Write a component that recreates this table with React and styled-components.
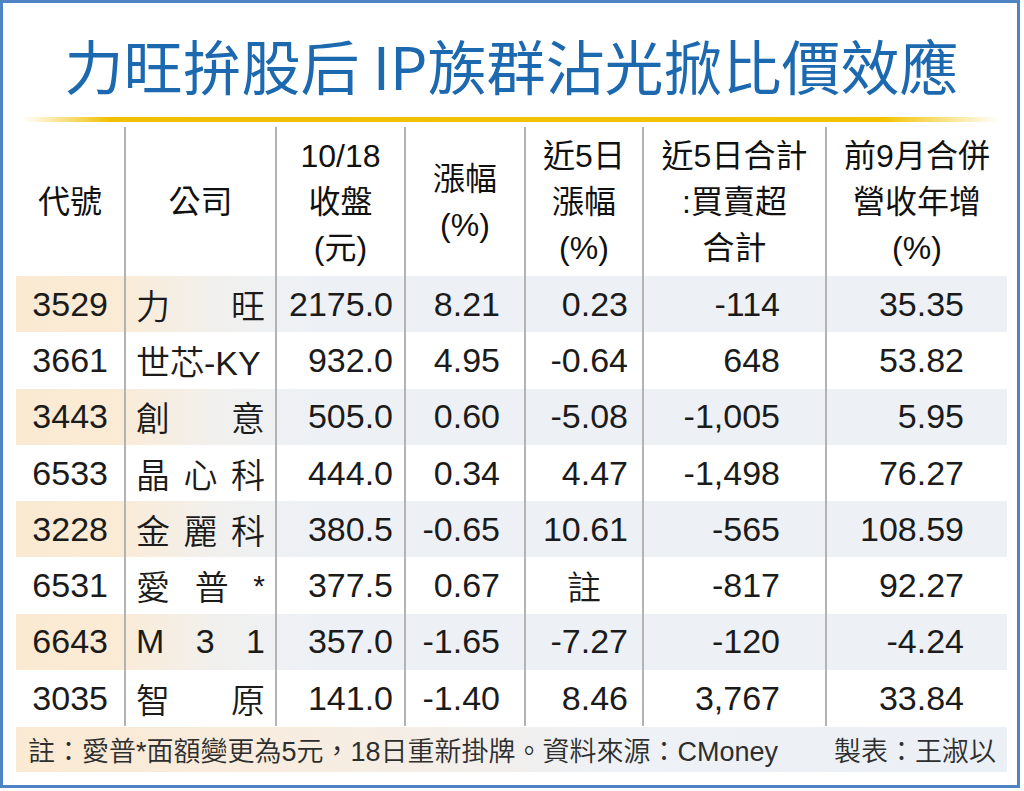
import React from 'react';
import styled, {createGlobalStyle} from 'styled-components';

const Global = createGlobalStyle`
    html, body {
        margin: 0;
        padding: 0;
        background: #fff;
    }
`
const COLS = '108px 151px 129px 120px 118px 183px 182px';
const SANS = `"Liberation Sans", "Noto Sans CJK TC", sans-serif`;

const Frame = styled.div`
    width: 1020px;
    height: 788px;
    box-sizing: border-box;
    border: 3px solid #4f84c4;
    padding: 0 10px 0 13px;
    background: #fff;
    font-family: ${SANS};
    color: #1b1b1b;
`
const Title = styled.h1`
    margin: 0;
    padding-top: 20px;
    line-height: 84px;
    font-family: "Noto Sans CJK TC", sans-serif;
    font-size: 59px;
    font-weight: 400;
    color: #1c69b0;
    text-align: center;
    white-space: nowrap;
`
const Rule = styled.div`
    margin: 10px 7px 0 6px;
    height: 5px;
    border-radius: 3px;
    background: linear-gradient(to right,
        rgba(242, 196, 0, 0) 0%,
        #f0c000 9%,
        #f3c300 88%,
        rgba(242, 196, 0, 0) 100%);
`
const Table = styled.div`
    margin-top: 5px;
`
const Row = styled.div`
    display: grid;
    grid-template-columns: ${COLS};
    height: ${p => p.$head ? '149px' : '56.3px'};
    background: ${p => p.$striped
        ? 'linear-gradient(to right, #fbead2 0px, #fbebd5 100px, #f1f0ee 200px, #edf1f6 300px, #edf1f6 100%)'
        : 'transparent'};
    & > div:not(:first-child) {
        border-left: 2px solid #b3b3b3;
    }
`
const HeadCell = styled.div`
    display: flex;
    flex-direction: column;
    align-items: center;
    justify-content: center;
    font-size: 32px;
    font-weight: 400;
    line-height: 46px;
    color: #111;
    white-space: nowrap;
`
const Cell = styled.div`
    display: flex;
    align-items: center;
    justify-content: ${p => p.$center ? 'center' : 'flex-end'};
    padding-right: ${p => p.$center ? 0 : p.$pad}px;
    font-size: 34px;
    font-weight: 350;
    white-space: nowrap;
`
const NameCell = styled.div`
    display: flex;
    align-items: center;
    justify-content: space-between;
    padding: 0 10px 0 10px;
    font-size: 34px;
    font-weight: 350;
    white-space: nowrap;
`
const Star = styled.span`
    align-self: flex-start;
    margin-top: 12px;
    font-size: 30px;
`
const Footer = styled.div`
    display: flex;
    align-items: center;
    justify-content: space-between;
    margin-top: 1px;
    height: 45px;
    padding: 0 11px 0 12px;
    font-size: 27px;
    font-weight: 350;
    color: #2e2e2e;
    white-space: nowrap;
    background: linear-gradient(to right, #fbead3 0%, #f6ede3 35%, #eef1f5 60%, #ebf0f6 100%);
`

const heads = [
    ['代號'],
    ['公司'],
    ['10/18', '收盤', '(元)'],
    ['漲幅', '(%)'],
    ['近5日', '漲幅', '(%)'],
    ['近5日合計', ':買賣超', '合計'],
    ['前9月合併', '營收年增', '(%)'],
];

// right padding of each numeric column
const pads = [16, 0, 11, 24, 14, 45, 43];

const rows = [
    ['3529', ['力', '旺'], '2175.0', '8.21', '0.23', '-114', '35.35'],
    ['3661', ['世芯-KY'], '932.0', '4.95', '-0.64', '648', '53.82'],
    ['3443', ['創', '意'], '505.0', '0.60', '-5.08', '-1,005', '5.95'],
    ['6533', ['晶', '心', '科'], '444.0', '0.34', '4.47', '-1,498', '76.27'],
    ['3228', ['金', '麗', '科'], '380.5', '-0.65', '10.61', '-565', '108.59'],
    ['6531', ['愛', '普', '*'], '377.5', '0.67', '註', '-817', '92.27'],
    ['6643', ['M', '3', '1'], '357.0', '-1.65', '-7.27', '-120', '-4.24'],
    ['3035', ['智', '原'], '141.0', '-1.40', '8.46', '3,767', '33.84'],
];

const App = () => {
    return (
        <>
            <Global/>
            <Frame>
                <Title>力旺拚股后 IP族群沾光掀比價效應</Title>
                <Rule/>
                <Table>
                    <Row $head>
                        {heads.map((lines, i) => (
                            <HeadCell key={i}>
                                {lines.map(l => <span key={l}>{l}</span>)}
                            </HeadCell>
                        ))}
                    </Row>
                    {rows.map((r, i) => (
                        <Row key={r[0]} $striped={i % 2 === 0}>
                            <Cell $pad={pads[0]}>{r[0]}</Cell>
                            <NameCell>
                                {r[1].map((t, j) => t === '*'
                                    ? <Star key={j}>*</Star>
                                    : <span key={j}>{t}</span>)}
                            </NameCell>
                            {r.slice(2).map((v, j) => (
                                <Cell key={j} $pad={pads[j + 2]} $center={v === '註'}>{v}</Cell>
                            ))}
                        </Row>
                    ))}
                </Table>
                <Footer>
                    <span>註：愛普*面額變更為5元，18日重新掛牌。資料來源：CMoney</span>
                    <span>製表：王淑以</span>
                </Footer>
            </Frame>
        </>
    )
}

export default App
